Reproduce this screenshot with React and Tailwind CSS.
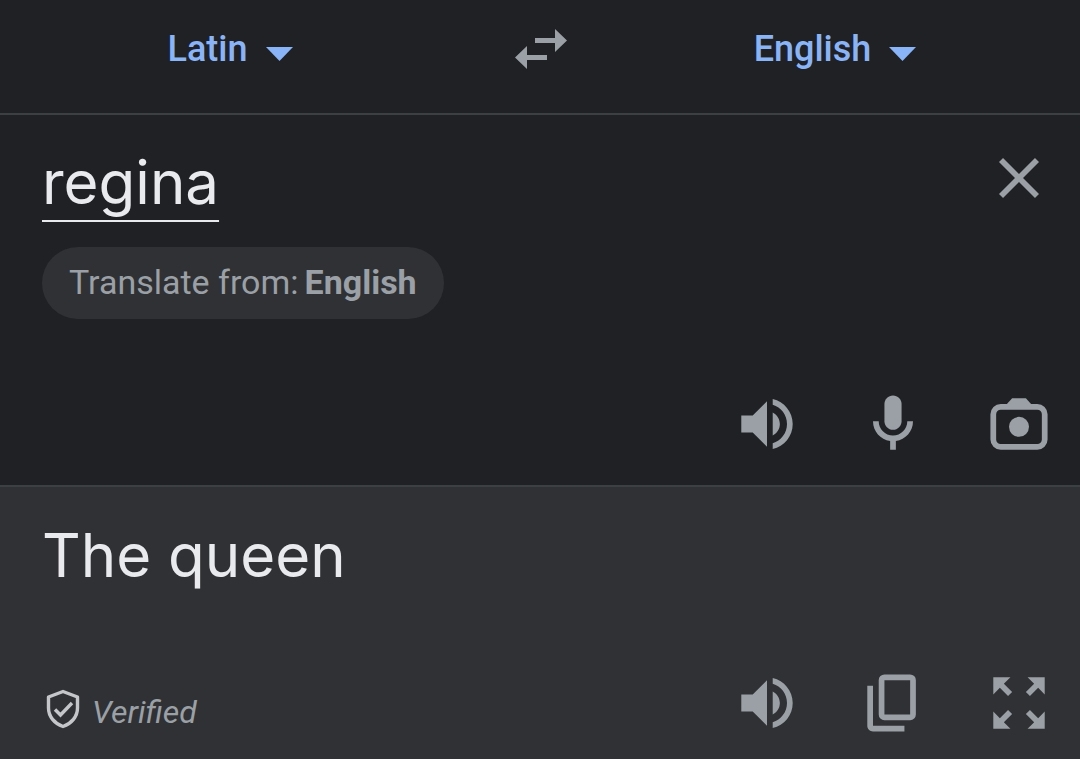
import React, { useState } from 'react';

// ── Icons (24-unit grid, cropped to the drawn area) ──────────────────────────
const Icon = ({ children }) => (
  <svg viewBox="1.5 1.5 21 21" className="size-[60px]" fill="currentColor" aria-hidden="true">
    {children}
  </svg>
);

const SpeakerIcon = () => (
  <Icon>
    <path d="M3 9v6h4l5 5V4L7 9H3zM16.5 12c0-1.77-1.02-3.29-2.5-4.03v8.05c1.48-.73 2.5-2.25 2.5-4.02z" />
    <path d="M14 3.23v2.06c2.89.86 5 3.54 5 6.71s-2.11 5.85-5 6.71v2.06c4.01-.91 7-4.49 7-8.77s-2.99-7.86-7-8.77z" />
  </Icon>
);

const MicIcon = () => (
  <Icon>
    <path d="M12 14c1.66 0 3-1.34 3-3V5c0-1.66-1.34-3-3-3S9 3.34 9 5v6c0 1.66 1.34 3 3 3z" />
    <path d="M17 11c0 2.76-2.24 5-5 5s-5-2.24-5-5H5c0 3.53 2.61 6.43 6 6.92V21h2v-3.08c3.39-.49 6-3.39 6-6.92h-2z" />
  </Icon>
);

const CameraIcon = () => (
  <Icon>
    <path d="M7.2 5.6 9.6 3h4.8l2.4 2.6z" />
    <rect x="3" y="6" width="18" height="14" rx="2.6" fill="none" stroke="currentColor" strokeWidth="2" />
    <circle cx="12" cy="13" r="3.5" />
  </Icon>
);

const CopyIcon = () => (
  <Icon>
    <rect x="8" y="3" width="11" height="14" rx="1" fill="none" stroke="currentColor" strokeWidth="2" />
    <path d="M3 6v14c0 1.1.9 2 2 2h11v-2H5V6z" />
  </Icon>
);

const ExpandIcon = () => (
  <Icon>
    <path d="M15 3l2.3 2.3-2.89 2.87 1.42 1.42L18.7 6.7 21 9V3zM3 9l2.3-2.3 2.87 2.89 1.42-1.42L6.7 5.3 9 3H3zM9 21l-2.3-2.3 2.89-2.87-1.42-1.42L5.3 17.3 3 15v6zM21 15l-2.3 2.3-2.87-2.89-1.42 1.42 2.89 2.87L15 21h6z" />
  </Icon>
);

const CloseIcon = () => (
  <Icon>
    <path d="M19 6.41 17.59 5 12 10.59 6.41 5 5 6.41 10.59 12 5 17.59 6.41 19 12 13.41 17.59 19 19 17.59 13.41 12z" />
  </Icon>
);

const SwapIcon = () => (
  <svg viewBox="0 0 52 40" className="h-10 w-[52px]" fill="currentColor" aria-hidden="true">
    <path d="M20 9h20V0l12 11.5L40 23v-9H20zM32 26H12v-9L0 28.5 12 40v-9h20z" />
  </svg>
);

const CaretIcon = () => (
  <svg viewBox="0 0 27 14" className="mt-2.5 h-3.5 w-[27px]" fill="currentColor" aria-hidden="true">
    <path d="M0 0h27L13.5 14z" />
  </svg>
);

const ShieldIcon = () => (
  <svg viewBox="0 0 34 40" className="h-10 w-[34px]" fill="none" stroke="#c4c6c9" strokeWidth="3.4" aria-hidden="true">
    <path d="M17 2.5 31.5 8v11c0 8.5-6 15.5-14.5 18.5C8.5 34.5 2.5 27.5 2.5 19V8z" strokeLinejoin="round" />
    <path d="M9 20.5l5.5 5.5L26 14" />
  </svg>
);

// ── Controls ─────────────────────────────────────────────────────────────────
const IconButton = ({ label, children, onClick }) => (
  <button type="button" aria-label={label} onClick={onClick} className="shrink-0 text-[#9aa0a6]">
    {children}
  </button>
);

const LanguageButton = ({ name }) => (
  <button
    type="button"
    aria-haspopup="listbox"
    className="flex items-center gap-[18px] justify-self-center text-4xl font-medium text-[#8ab4f8]"
  >
    {name}
    <CaretIcon />
  </button>
);

const App = () => {
  const [text, setText] = useState('regina');

  return (
    <div className="flex min-h-screen flex-col bg-[#202124] font-['Roboto',sans-serif]">
      <header className="grid grid-cols-[460fr_162fr_426fr] items-center border-b-2 border-[#3c4043] pt-[29px] pr-8 pb-11">
        <LanguageButton name="Latin" />
        <button type="button" aria-label="Swap languages" className="justify-self-center text-[#9aa0a6]">
          <SwapIcon />
        </button>
        <LanguageButton name="English" />
      </header>

      {/* Source text */}
      <section className="border-b-2 border-[#3c4043] pt-6 pr-[31px] pb-[31px] pl-[42px]">
        <div className="flex items-start">
          <input
            type="text"
            aria-label="Source text"
            value={text}
            onChange={(e) => setText(e.target.value)}
            className="h-[86px] min-w-0 flex-1 bg-transparent font-['Inter',sans-serif] text-[60px] text-[#e8eaed] underline decoration-2 underline-offset-[16px] outline-none [text-decoration-skip-ink:none]"
          />
          <div className="pt-[9px]">
            <IconButton label="Clear text" onClick={() => setText('')}>
              <CloseIcon />
            </IconButton>
          </div>
        </div>
        <button
          type="button"
          className="mt-[22px] flex gap-1.5 rounded-full bg-[#303134] px-[27px] pt-[15px] pb-[17px] text-[34px] leading-10 text-[#9aa0a6]"
        >
          Translate from: <b>English</b>
        </button>
        <div className="mt-[75px] flex justify-end gap-[66px]">
          <IconButton label="Listen to source"><SpeakerIcon /></IconButton>
          <IconButton label="Voice input"><MicIcon /></IconButton>
          <IconButton label="Camera input"><CameraIcon /></IconButton>
        </div>
      </section>

      {/* Translation */}
      <section className="flex-1 bg-[#303134] pt-7 pr-[31px] pb-[26px] pl-[42px]">
        <p className="font-['Inter',sans-serif] text-[60px] leading-[80px] text-[#e8eaed]">The queen</p>
        <div className="mt-[78px] flex items-center justify-between">
          <div className="flex items-center gap-3 pt-3 pl-1 text-[#9aa0a6]">
            <ShieldIcon />
            <span className="pt-1.5 text-[32px] leading-10 italic">Verified</span>
          </div>
          <div className="flex gap-[66px]">
            <IconButton label="Listen to translation"><SpeakerIcon /></IconButton>
            <IconButton label="Copy translation"><CopyIcon /></IconButton>
            <IconButton label="Full screen"><ExpandIcon /></IconButton>
          </div>
        </div>
      </section>
    </div>
  );
};

export default App;
